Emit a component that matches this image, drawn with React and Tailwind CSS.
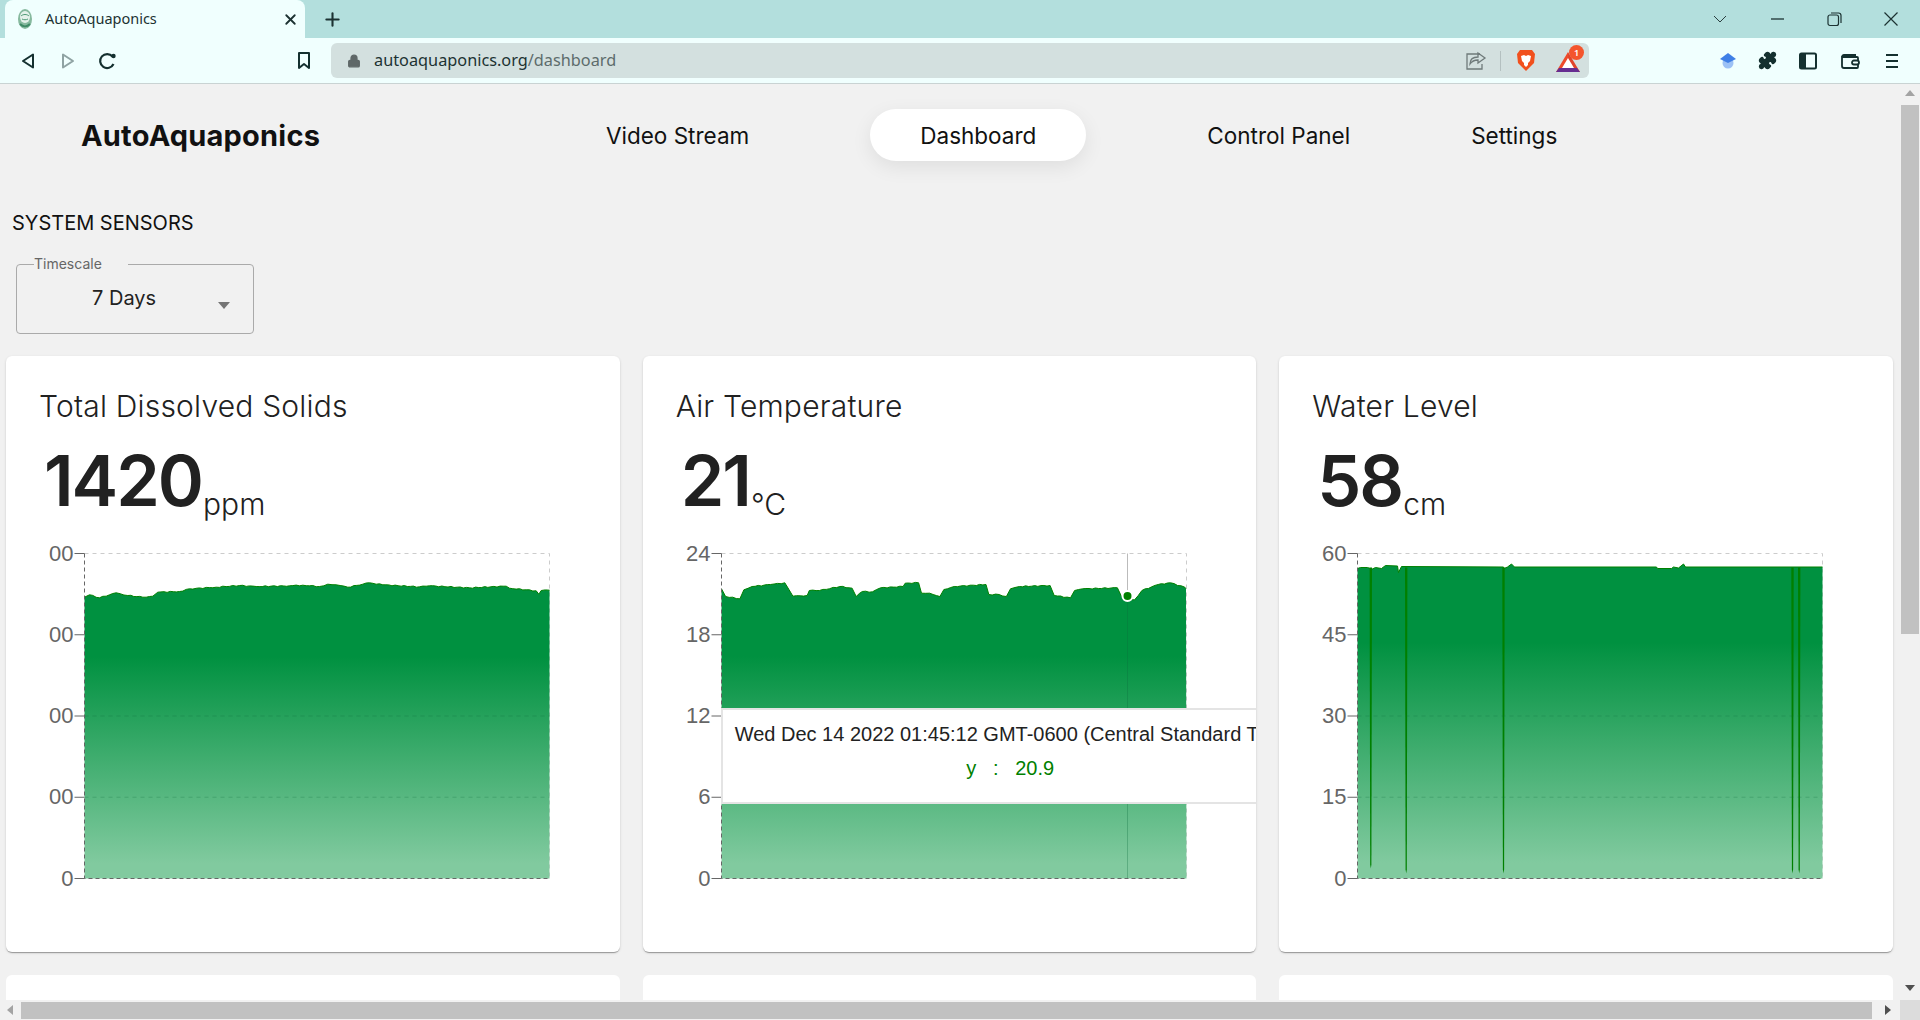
import { X, Plus, Lock, Puzzle } from 'lucide-react'

const TDS_LINE = [[45,155],[60,148],[90,157],[140,142],[175,150],[220,155],[250,152],[265,140],[330,138],[360,130],[440,125],[510,120],[560,123],[660,121],[700,119],[750,123],[775,116],[800,118],[835,125],[880,116],[900,112],[940,118],[1050,124],[1080,121],[1200,127],[1310,122],[1320,128],[1400,136],[1408,146],[1415,135],[1440,134]]
  .map(([x, y]) => [(x - 45) / 3, (y - 24) / 3])

const AIR_LINE = [[200,205],[210,228],[245,235],[255,208],[275,198],[320,192],[355,187],[375,227],[410,225],[415,210],[440,210],[490,198],[520,203],[530,228],[545,213],[570,214],[590,202],[645,198],[650,188],[683,187],[690,218],[710,218],[735,228],[745,207],[770,198],[848,192],[855,222],[880,222],[898,228],[908,205],[930,198],[1005,195],[1015,225],[1055,232],[1065,210],[1085,205],[1170,202],[1180,228],[1195,240],[1212,238],[1230,210],[1270,192],[1300,187],[1335,200],[1338,205]]
  .map(([x, y]) => [(x - 200) / 2.45, (y - 99) / 3])

const WATER_LINE = [[0,15],[3,14],[10,14],[12.8,15],[13.3,19],[13.8,16],[18,14],[24,15],[28,12],[40,12.5],[41,19],[44,13],[146,13.5],[146.5,15],[150,13.5],[154,10.5],[157,13.5],[299,13.5],[300,15],[314,15],[316,13.5],[321,14.5],[326,10.5],[328,13.5],[465,13.5]]

const WATER_SPIKES = [[13.3, 315], [48.7, 320], [146, 320], [435, 320], [441.7, 320]]

// small wobble so the line is not perfectly straight between traced points
function rough(points, amp) {
  const out = []
  points.forEach(([x, y], i) => {
    out.push([x, y])
    const next = points[i + 1]
    if (!next) return
    const steps = Math.floor((next[0] - x) / 3)
    for (let s = 1; s < steps; s++) {
      const t = s / steps
      out.push([x + (next[0] - x) * t, y + (next[1] - y) * t + Math.sin(x * 3.1 + s * 2.3) * amp])
    }
  })
  return out
}

function toPath(points) {
  return points.map(([x, y], i) => `${i === 0 ? 'M' : 'L'}${x.toFixed(1)} ${y.toFixed(1)}`).join(' ')
}

const TICK_Y = [0, 81.25, 162.5, 243.75, 325]

function Chart({ id, line, ticks, cursor, spikes = [] }) {
  const d = toPath(line)
  return (
    <svg width="545" height="345" className="block mt-[23px] overflow-visible">
      <defs>
        <linearGradient id={id} x1="0" y1="0" x2="0" y2="1">
          <stop offset="25%" stopColor="#009140" />
          <stop offset="95%" stopColor="#81ca9f" />
        </linearGradient>
      </defs>
      <g transform="translate(45.5 10.5)">
        <path d="M0 0H465V325" fill="none" stroke="#ccc" strokeDasharray="4 4" />
        {cursor && <line x1={cursor[0]} x2={cursor[0]} y1="0" y2={cursor[1]} stroke="#bbb" />}
        <path d={`${d} L465 325 L0 325 Z`} fill={`url(#${id})`} />
        <path d={d} fill="none" stroke="#008000" />
        {spikes.map(([x, y]) => (
          <path key={x} d={`M${x - 1.2} 14 L${x + 1.2} 14 L${x + 0.6} ${y - 4} L${x} ${y} L${x - 0.6} ${y - 4} Z`} fill="#008000" />
        ))}
        {TICK_Y.slice(2, 4).map((y) => (
          <line key={y} x1="0" x2="465" y1={y} y2={y} stroke="#0b6b3a" strokeOpacity="0.25" strokeDasharray="4 4" />
        ))}
        {cursor && <line x1={cursor[0]} x2={cursor[0]} y1={cursor[1]} y2="325" stroke="#0b6b3a" strokeOpacity="0.3" />}
        <path d="M0 0V325H465" fill="none" stroke="#666" strokeDasharray="4 3" />
        {TICK_Y.map((y, i) => (
          <g key={y}>
            <line x1="-10" x2="0" y1={y} y2={y} stroke="#666" />
            <text x="-11" y={y + 7} textAnchor="end" fill="#666" fontSize="22" fontFamily="Liberation Sans, sans-serif">
              {ticks[i]}
            </text>
          </g>
        ))}
        {cursor && <circle cx={cursor[0]} cy={cursor[1]} r="5" fill="#008000" stroke="#fff" strokeWidth="2" />}
      </g>
    </svg>
  )
}

function Card({ title, value, unit, children, overlay }) {
  return (
    <div className="relative h-[596px] bg-white rounded-[6px] overflow-hidden px-[33px] pt-[33px] shadow-[0_2px_1px_-1px_rgba(0,0,0,0.2),0_1px_1px_0_rgba(0,0,0,0.14),0_1px_3px_0_rgba(0,0,0,0.12)]">
      <div className="text-[30px] leading-[34px] font-light text-[#212121] tracking-[0.2px]">{title}</div>
      <div className="mt-[20px] h-[77px] pl-[5px] whitespace-nowrap text-[#212121]">
        <span className="text-[70px] leading-[76px] font-semibold tracking-[-2px]">{value}</span>
        <span className="text-[30px] leading-[30px] font-light align-[-9px] ml-[1px]">{unit}</span>
      </div>
      {children}
      {overlay}
    </div>
  )
}

function TooltipBox() {
  return (
    <div className="absolute left-[78px] top-[352px] w-[580px] h-[96px] bg-white border-2 border-[#e4e4e4] pl-[12px] pt-[7px] text-center whitespace-nowrap font-['Liberation_Sans',sans-serif] text-[20px] leading-[34px] text-[#222]">
      <div className="text-left">Wed Dec 14 2022 01:45:12 GMT-0600 (Central Standard Time)</div>
      <div className="text-[#008000] whitespace-pre pr-[13px]">y   :   20.9</div>
    </div>
  )
}

function BrowserChrome() {
  return (
    <div className="font-['Noto_Sans',sans-serif] text-[#1c3232]">
      <div className="h-[38px] bg-[#b3dfdd] flex items-center">
        <div className="ml-[5px] w-[300px] h-[38px] bg-[#f0fffe] rounded-t-[8px] flex items-center pl-[9px] pr-[6px]">
          <svg width="22" height="24" viewBox="0 0 22 24">
            <ellipse cx="11" cy="12" rx="7" ry="10" fill="#86b99e" />
            <ellipse cx="11" cy="10" rx="5" ry="6" fill="#e4f1ea" />
            <path d="M7 9c2-2 6-2 8 0M8 12c2 1 4 1 6 0" stroke="#4f9a75" fill="none" />
            <path d="M6 17c3 3 7 3 10 0" stroke="#3f8a66" strokeWidth="2" fill="none" />
          </svg>
          <span className="ml-[9px] text-[14.5px] flex-1">AutoAquaponics</span>
          <X size={17} strokeWidth={2.6} />
        </div>
        <Plus size={21} strokeWidth={2.4} className="ml-[17px]" />
        <div className="ml-auto flex items-center gap-[37px] pr-[19px]">
          <svg width="20" height="20" viewBox="0 0 20 20" fill="none" stroke="#2b3f3f"><path d="M4 7l6 6 6-6" /></svg>
          <svg width="20" height="20" viewBox="0 0 20 20" fill="none" stroke="#1c3232"><path d="M4 10h13" strokeWidth="1.3" /></svg>
          <svg width="20" height="20" viewBox="0 0 20 20" fill="none" stroke="#1c3232" strokeWidth="1.2"><rect x="4" y="6" width="10.5" height="10.5" rx="2" /><path d="M7 4h7.5a2.5 2.5 0 0 1 2.5 2.5V14" /></svg>
          <svg width="20" height="20" viewBox="0 0 20 20" fill="none" stroke="#1c3232" strokeWidth="1.2"><path d="M3.5 3.5l13 13M16.5 3.5l-13 13" /></svg>
        </div>
      </div>
      <div className="h-[46px] bg-[#f0fffe] border-b border-[#c9d3d3] flex items-center">
        <svg width="16" height="18" viewBox="0 0 16 18" className="ml-[20px]" fill="none" stroke="#14302f" strokeWidth="2" strokeLinejoin="round"><path d="M13 2.5v13L3 9z" /></svg>
        <svg width="16" height="18" viewBox="0 0 16 18" className="ml-[24px]" fill="none" stroke="#8fa3a3" strokeWidth="2" strokeLinejoin="round"><path d="M3 2.5v13L13 9z" /></svg>
        <svg width="20" height="20" viewBox="0 0 20 20" className="ml-[22px]" fill="none" stroke="#14302f" strokeWidth="2.2"><path d="M15.5 13a7 7 0 1 1-1-7.5" /><circle cx="15.5" cy="5" r="2.2" fill="#14302f" stroke="none" /></svg>
        <svg width="14" height="19" viewBox="0 0 14 19" className="ml-[179px]" fill="none" stroke="#14302f" strokeWidth="2" strokeLinejoin="round"><path d="M2 2h10v15l-5-4-5 4z" /></svg>
        <div className="ml-[20px] w-[1258px] h-[35px] bg-[#d3e0df] rounded-[6px] flex items-center pr-[9px]">
          <Lock size={14} strokeWidth={2.4} className="ml-[16px] text-[#5f6868] fill-[#5f6868]" />
          <span className="ml-[13px] text-[16.3px]">
            autoaquaponics.org<span className="text-[#5d6c6c]">/dashboard</span>
          </span>
          <svg width="22" height="20" viewBox="0 0 22 20" className="ml-auto" fill="none" stroke="#6f7a7a" strokeWidth="1.3">
            <path d="M15 3H2v15h15v-5" />
            <path d="M13 2l7 5-7 5V9c-4 0-6 1-8 4 0-5 3-7 8-7z" />
          </svg>
          <div className="ml-[13px] w-px h-[20px] bg-[#b4c0c0]" />
          <svg width="20" height="23" viewBox="0 0 20 23" className="ml-[15px]">
            <path d="M4 1h12l3 4-1 9-8 8-8-8-1-9z" fill="#f1501d" />
            <path d="M5 7l3-1 2 1 2-1 3 1-1 5-2 2v2l-2 2-2-2v-2l-2-2z" fill="#fff" />
          </svg>
          <div className="relative ml-[20px] w-[24px] h-[22px]">
            <svg width="24" height="20" viewBox="0 0 24 20" className="mt-[2px]">
              <path d="M12 0L0 20h7l5-9z" fill="#ee4a2a" />
              <path d="M12 0l12 20h-7l-5-9z" fill="#e0452b" />
              <path d="M0 20h24l-3-4H3z" fill="#662d91" />
              <path d="M12 6l6 10H6z" fill="#fff" />
            </svg>
            <span className="absolute left-[13px] -top-[5px] w-[15px] h-[15px] rounded-full bg-[#f4552d] text-white text-[9px] leading-[15px] text-center font-semibold">1</span>
          </div>
        </div>
        <svg width="18" height="20" viewBox="0 0 18 20" className="ml-[130px]">
          <circle cx="9" cy="12" r="5.5" fill="#9cc1f5" />
          <path d="M9 2l8 6-8 4-8-4z" fill="#3f7fe6" />
        </svg>
        <Puzzle size={19} className="ml-[21px] text-[#14302f] fill-[#14302f]" />
        <svg width="18" height="18" viewBox="0 0 18 18" className="ml-[22px]"><rect x="1" y="1.5" width="16" height="15" rx="1.5" fill="none" stroke="#14302f" strokeWidth="2" /><rect x="1" y="1.5" width="6" height="15" fill="#14302f" /></svg>
        <svg width="20" height="18" viewBox="0 0 20 18" className="ml-[23px]" fill="none" stroke="#14302f" strokeWidth="1.8"><path d="M2 5a2 2 0 0 1 2-2h12M2 5v9a2 2 0 0 0 2 2h13a1 1 0 0 0 1-1V6a1 1 0 0 0-1-1H2z" /><rect x="12" y="8.5" width="7" height="4" rx="2" fill="#f0fffe" /></svg>
        <svg width="14" height="16" viewBox="0 0 14 16" className="ml-[25px]" stroke="#14302f" strokeWidth="2"><path d="M1 2h12M1 8h12M1 14h12" /></svg>
      </div>
    </div>
  )
}

function Scrollbars({ vertical }) {
  if (vertical) {
    return (
      <div className="w-[20px] bg-[#f1f1f1] flex flex-col items-center">
        <svg width="10" height="6" className="mt-[6px]"><path d="M0 6L5 0l5 6z" fill="#a3a3a3" /></svg>
        <div className="mt-[9px] w-[18px] h-[529px] bg-[#c1c1c1]" />
        <svg width="10" height="6" className="mt-auto mb-[9px]"><path d="M0 0l5 6 5-6z" fill="#505050" /></svg>
      </div>
    )
  }
  return (
    <div className="h-[20px] bg-[#f1f1f1] flex items-center">
      <svg width="6" height="10" className="ml-[7px]"><path d="M6 0L0 5l6 5z" fill="#a3a3a3" /></svg>
      <div className="ml-[8px] w-[1851px] h-[17px] bg-[#c1c1c1]" />
      <svg width="6" height="10" className="ml-[13px]"><path d="M0 0l6 5-6 5z" fill="#505050" /></svg>
      <div className="ml-auto w-[20px] h-[20px] bg-[#dcdcdc]" />
    </div>
  )
}

export default function App() {
  return (
    <div className="w-[1920px] h-[1020px] overflow-hidden flex flex-col bg-[#f1f1f1] font-['Inter',sans-serif]">
      <BrowserChrome />
      <div className="flex-1 min-h-0 flex">
        <main className="flex-1 min-w-0 overflow-hidden">
          <nav className="mt-[25px] h-[51px] flex items-center text-[22.5px] text-[#111]">
            <div className="ml-[81px] w-[240px] pt-[2px] text-[29px] font-bold tracking-[0.2px] whitespace-nowrap">AutoAquaponics</div>
            <div className="ml-[285px] flex items-center gap-[121px]">
              <span className="pt-[2px]">Video Stream</span>
              <span className="h-[52px] px-[50px] pt-[2px] flex items-center bg-white rounded-full shadow-[0_6px_20px_rgba(0,0,0,0.08)]">Dashboard</span>
              <span className="pt-[2px]">Control Panel</span>
              <span className="pt-[2px]">Settings</span>
            </div>
          </nav>
          <h2 className="mt-[51px] ml-[12px] text-[20px] leading-[24px] text-[#111]">SYSTEM SENSORS</h2>
          <fieldset className="mt-[19px] ml-[16px] w-[238px] h-[80px] border border-[#aaa] rounded-[4px] flex">
            <legend className="ml-[17px] pr-[26px] text-[14px] leading-[20px] text-[#666]">Timescale</legend>
            <div className="flex items-start w-full">
              <span className="ml-[75px] mt-[12px] text-[20px] leading-[24px] text-[#222]">7 Days</span>
              <svg width="12" height="7" className="ml-[62px] mt-[28px]"><path d="M0 0h12L6 7z" fill="#757575" /></svg>
            </div>
          </fieldset>
          <div className="mt-[22px] ml-[6px] w-[1887px] grid grid-cols-3 gap-[23px]">
            <Card title="Total Dissolved Solids" value="1420" unit="ppm">
              <Chart id="tds" line={rough(TDS_LINE, 0.5)} ticks={['00', '00', '00', '00', '0']} />
            </Card>
            <Card title="Air Temperature" value="21" unit="°C" overlay={<TooltipBox />}>
              <Chart id="air" line={rough(AIR_LINE, 0.5)} ticks={['24', '18', '12', '6', '0']} cursor={[406, 42.5]} />
            </Card>
            <Card title="Water Level" value="58" unit="cm">
              <Chart id="water" line={WATER_LINE} ticks={['60', '45', '30', '15', '0']} spikes={WATER_SPIKES} />
            </Card>
            <div className="h-[40px] bg-white rounded-[6px]" />
            <div className="h-[40px] bg-white rounded-[6px]" />
            <div className="h-[40px] bg-white rounded-[6px]" />
          </div>
        </main>
        <Scrollbars vertical />
      </div>
      <Scrollbars />
    </div>
  )
}
